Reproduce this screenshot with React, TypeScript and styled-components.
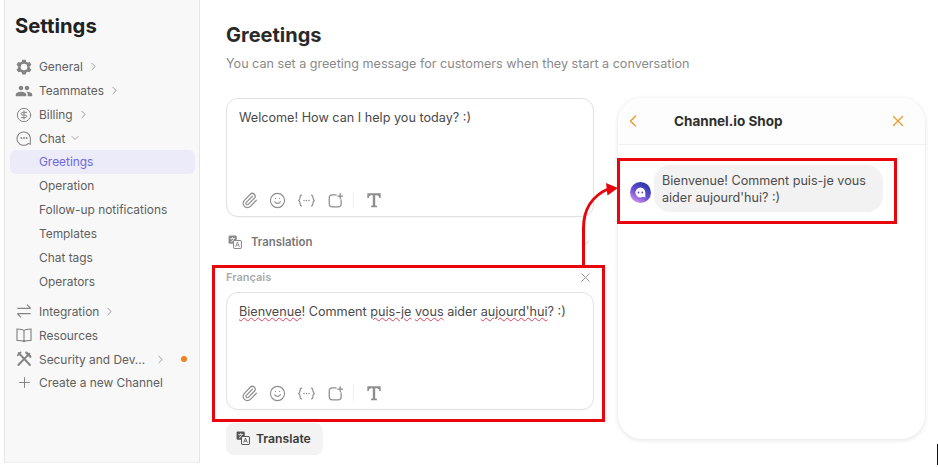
import styled, { createGlobalStyle } from "styled-components";
import {
  ChevronDown,
  ChevronLeft,
  ChevronRight,
  CircleDollarSign,
  Paperclip,
  Plus,
  Smile,
  X,
} from "lucide-react";
import { MdPeople } from "react-icons/md";
import type { ReactNode } from "react";

const GlobalStyle = createGlobalStyle`
  html, body {
    margin: 0;
    padding: 0;
    background: #fff;
    overflow: hidden;
  }
  * {
    box-sizing: border-box;
  }
`;

const Page = styled.div`
  position: relative;
  display: flex;
  width: 938px;
  height: 468px;
  font-family: Inter, "Liberation Sans", sans-serif;
  color: #333;
  overflow: hidden;
`;

const Sidebar = styled.aside`
  width: 196px;
  height: 463px;
  margin-left: 4px;
  padding: 14px 4px 0 5px;
  flex-shrink: 0;
  background: #f8f8f8;
  border-left: 1px solid #e6e6e6;
  border-right: 1px solid #e4e4e4;
  border-bottom: 1px solid #f0f0f0;
`;

const SideTitle = styled.h1`
  margin: 0 0 17px 5px;
  font-size: 20.3px;
  line-height: 24px;
  font-weight: 700;
  color: #222;
`;

const NavGroup = styled.nav<{ $gap?: number }>`
  display: flex;
  flex-direction: column;
  margin-top: ${(p) => p.$gap ?? 0}px;
`;

const NavRow = styled.div<{ $active?: boolean }>`
  display: flex;
  align-items: center;
  height: 23.85px;
  padding-left: 5px;
  font-size: 11.9px;
  white-space: nowrap;
  border-radius: 6px;
  color: ${(p) => (p.$active ? "#7068dc" : "#5f5f5f")};
  background: ${(p) => (p.$active ? "#ecebfa" : "transparent")};
`;

const IconSlot = styled.span`
  display: flex;
  align-items: center;
  justify-content: center;
  width: 18px;
  height: 18px;
  margin-right: 6px;
  color: #838383;
  flex-shrink: 0;
`;

const SubLabel = styled.span`
  margin-left: 24px;
  margin-bottom: 1px;
`;

const Caret = styled.span<{ $offset?: number }>`
  display: flex;
  margin-left: ${(p) => p.$offset ?? 4}px;
  color: #8a8a8a;
`;

const Dot = styled.span`
  width: 6px;
  height: 6px;
  margin-left: 14px;
  border-radius: 50%;
  background: #f0821e;
`;

const Main = styled.main`
  flex: 1;
  display: flex;
  flex-direction: column;
  padding: 22px 0 0 26px;
`;

const MainTitle = styled.h2`
  margin: 0;
  font-size: 20px;
  line-height: 26px;
  font-weight: 700;
  color: #2a2a2a;
`;

const Subtitle = styled.p`
  margin: 7px 0 0;
  font-size: 12.6px;
  line-height: 17px;
  color: #8a8a8a;
`;

const Columns = styled.div`
  display: flex;
  margin-top: 26px;
`;

const EditorColumn = styled.div`
  width: 393px;
  margin-left: -14px;
  flex-shrink: 0;
`;

const Editor = styled.div<{ $height: number }>`
  display: flex;
  flex-direction: column;
  justify-content: space-between;
  height: ${(p) => p.$height}px;
  padding: 9px 12px 6px;
  background: #fff;
  border: 1px solid #e2e2e2;
  border-radius: 12px;
  box-shadow: 0 1px 2px rgba(0, 0, 0, 0.03);
`;

const FirstEditor = styled.div`
  padding: 0 11px 0 14px;
`;

const EditorText = styled.div`
  font-size: 12.65px;
  line-height: 20px;
  color: #4a4a4a;
`;

const Misspelled = styled.span`
  text-decoration: underline wavy #e0405a 1px;
  text-underline-offset: 1px;
`;

const Toolbar = styled.div`
  display: flex;
  align-items: center;
  color: #8e8e8e;
`;

const ToolButton = styled.span`
  display: flex;
  align-items: center;
  justify-content: center;
  width: 20px;
  height: 20px;
  margin-right: 8.8px;
`;

const ToolDivider = styled.span`
  width: 1px;
  height: 16px;
  margin: 0 10px 0 -1px;
  background: #efefef;
`;

const TranslationRow = styled.div`
  display: flex;
  align-items: center;
  height: 26px;
  margin: 12px 11px 10px 14px;
  padding-left: 2px;
  font-size: 11.4px;
  font-weight: 600;
  color: #777;
`;

const RowIcon = styled.span`
  display: flex;
  margin-right: 9px;
`;

const RowCaret = styled.span`
  display: flex;
  margin-left: auto;
  margin-right: 2px;
  color: #c4c4c4;
`;

const RedBox = styled.div`
  height: 157px;
  padding: 0 8px 0 11px;
  border: 3px solid #e8060c;
`;

const LangHead = styled.div`
  display: flex;
  align-items: center;
  justify-content: space-between;
  height: 24px;
  padding-bottom: 6px;
  padding-right: 1px;
  font-size: 11px;
  font-weight: 600;
  color: #ababab;
`;

const LangClose = styled.span`
  display: flex;
  color: #8f8f8f;
`;

const TranslateButton = styled.button`
  display: flex;
  align-items: center;
  gap: 6px;
  width: 97px;
  height: 32px;
  margin: 1px 0 0 14px;
  padding: 0 0 2px 10px;
  border: 0;
  border-radius: 8px;
  background: #f3f3f3;
  font-family: inherit;
  font-size: 12.2px;
  font-weight: 600;
  color: #3a3a3a;
`;

const Preview = styled.section`
  display: flex;
  flex-direction: column;
  width: 307px;
  height: 341px;
  margin-left: 13px;
  border-radius: 24px;
  background: #fff;
  box-shadow: 0 1px 5px rgba(0, 0, 0, 0.12);
`;

const PreviewHeader = styled.header`
  display: flex;
  align-items: center;
  height: 47px;
  padding: 0 18px 0 5px;
  border-bottom: 1px solid #f1f1f1;
  background: #fdfdfd;
  border-radius: 24px 24px 0 0;
`;

const PreviewTitle = styled.h3`
  margin: 0 0 0 31px;
  font-size: 13.5px;
  font-weight: 700;
  color: #2e2e2e;
`;

const HeaderClose = styled.span`
  display: flex;
  margin-left: auto;
  color: #ee9a26;
`;

const HeaderBack = styled.span`
  display: flex;
  color: #ee9a26;
`;

const MessageBox = styled.div`
  display: flex;
  align-items: center;
  width: 280px;
  height: 66px;
  margin: 13px 0 0 -1px;
  padding-left: 10px;
  border: 3px solid #e8060c;
`;

const Avatar = styled.svg`
  flex-shrink: 0;
  margin-top: 3px;
`;

const Bubble = styled.div`
  width: 229px;
  height: 47px;
  margin: 0 0 5px 3px;
  padding: 7px 8px;
  border-radius: 16px;
  background: #f2f2f2;
  font-size: 12.6px;
  line-height: 17.4px;
  color: #4c4c4c;
`;

const ArrowLayer = styled.svg`
  position: absolute;
  top: 170px;
  left: 570px;
`;

const CursorMark = styled.span`
  position: absolute;
  left: 937px;
  top: 444px;
  width: 1px;
  height: 21px;
  background: #111;
`;

const GearIcon = () => (
  <svg width="16" height="16" viewBox="0 0 24 24" fill="#838383">
    <path
      fillRule="evenodd"
      d="M9.5 1h5l.8 3.2 2.1 1.2 3.2-.9 2.4 4.2-2.4 2.3v2.4l2.4 2.3-2.4 4.2-3.2-.9-2.1 1.2-.8 3.2h-5l-.8-3.2-2.1-1.2-3.2.9L.8 15.7l2.4-2.3V11L.8 8.7l2.4-4.2 3.2.9 2.1-1.2zM12 7a5 5 0 1 0 0 10 5 5 0 0 0 0-10z"
    />
  </svg>
);

const ChatIcon = () => (
  <svg width="16" height="16" viewBox="0 0 24 24" fill="none" stroke="#838383" strokeWidth="1.6">
    <path d="M21.5 21.5l-3.2-1.2A10 10 0 1 1 21.5 12v9.5z" strokeLinejoin="round" />
    <circle cx="8" cy="12" r="0.6" fill="#838383" />
    <circle cx="12" cy="12" r="0.6" fill="#838383" />
    <circle cx="16" cy="12" r="0.6" fill="#838383" />
  </svg>
);

const SwapIcon = () => (
  <svg width="16" height="16" viewBox="0 0 24 24" fill="none" stroke="#838383" strokeWidth="1.8">
    <path d="M2 8h20M16.5 2.5L22 8M22 16H2M7.5 21.5L2 16" />
  </svg>
);

const BookIcon = () => (
  <svg width="16" height="16" viewBox="0 0 24 24" fill="none" stroke="#838383" strokeWidth="1.7">
    <path d="M12 5.5C10 3.5 6 3 1.5 3v17c4.500 0 8.500 0 10.500 2 2-2 6-2 10.500-2V3C18 3 14 3.500 12 5.500zM12 5.500V22" />
  </svg>
);

const ToolsIcon = () => (
  <svg width="16" height="16" viewBox="0 0 24 24" fill="none" stroke="#838383" strokeLinecap="round">
    <path d="M4 3l17 18" strokeWidth="2.8" />
    <path d="M20 4L3.5 21" strokeWidth="2.8" />
    <path d="M15.5 2.5l6 6" strokeWidth="3.4" />
    <path d="M2.5 6.5L7 2" strokeWidth="2.4" />
  </svg>
);

const TranslateIcon = ({ color }: { color: string }) => (
  <svg width="14" height="14" viewBox="0 0 24 24" fill="none">
    <rect x="1" y="1" width="14" height="14" rx="2" fill={color} />
    <path d="M4 6h8M8 3.5V6M5 12c3-1.500 4.500-3.500 5-6M6 7.500c1 2 2.500 3.500 5 4.500" stroke="#fff" strokeWidth="1.2" />
    <rect x="9.5" y="9.5" width="13.5" height="13.5" rx="2" fill="#fff" stroke={color} strokeWidth="1.8" />
    <path d="M13 20l3.2-8 3.2 8M14.2 17.5h4" stroke={color} strokeWidth="1.5" />
  </svg>
);

const VariableIcon = () => (
  <svg width="17" height="17" viewBox="0 0 24 24" fill="none" stroke="#8e8e8e" strokeWidth="1.7" strokeLinecap="round">
    <path d="M5 4.5c-2 0-2 1-2 3s0 3-2 4.500c2 1.500 2 2.500 2 4.500s0 3 2 3" />
    <path d="M19 4.5c2 0 2 1 2 3s0 3 2 4.500c-2 1.500-2 2.500-2 4.500s0 3-2 3" />
    <path d="M8.5 12h.01M12 12h.01M15.5 12h.01" strokeWidth="2.2" />
  </svg>
);

const AddFrameIcon = () => (
  <svg width="15" height="15" viewBox="0 0 24 24" fill="none" stroke="#8e8e8e" strokeWidth="2" strokeLinecap="round">
    <path d="M13 3H7a5 5 0 0 0-5 5v9a5 5 0 0 0 5 5h9a5 5 0 0 0 5-5v-6" />
    <path d="M19.5 1v8M15.5 5h8" />
  </svg>
);

const EditorTools = () => (
  <Toolbar>
    <ToolButton>
      <Paperclip size={17} strokeWidth={1.7} />
    </ToolButton>
    <ToolButton>
      <Smile size={17} strokeWidth={1.6} />
    </ToolButton>
    <ToolButton>
      <VariableIcon />
    </ToolButton>
    <ToolButton>
      <AddFrameIcon />
    </ToolButton>
    <ToolDivider />
    <ToolButton>
      <svg width="16" height="16" viewBox="0 0 24 24" fill="#8e8e8e">
        <path d="M2 2h20v7h-2c-.4-2.500-1.500-4-4-4h-2.200v14.500c0 .8.600 1.200 2.700 1.300V23h-9v-2.200c2.100-.1 2.700-.5 2.700-1.300V5H8C5.500 5 4.400 6.500 4 9H2z" />
      </svg>
    </ToolButton>
  </Toolbar>
);

const Row = ({ icon, label, caret }: { icon: ReactNode; label: string; caret?: boolean }) => (
  <NavRow>
    <IconSlot>{icon}</IconSlot>
    {label}
    {caret && (
      <Caret>
        <ChevronRight size={13} strokeWidth={1.6} />
      </Caret>
    )}
  </NavRow>
);

export default function App() {
  return (
    <Page>
      <GlobalStyle />
      <Sidebar>
        <SideTitle>Settings</SideTitle>
        <NavGroup>
          <Row icon={<GearIcon />} label="General" caret />
          <Row icon={<MdPeople size={18} />} label="Teammates" caret />
          <Row icon={<CircleDollarSign size={16} strokeWidth={1.5} />} label="Billing" caret />
          <NavRow>
            <IconSlot>
              <ChatIcon />
            </IconSlot>
            Chat
            <Caret>
              <ChevronDown size={12} strokeWidth={1.6} />
            </Caret>
          </NavRow>
          <NavRow $active>
            <SubLabel>Greetings</SubLabel>
          </NavRow>
          {["Operation", "Follow-up notifications", "Templates", "Chat tags", "Operators"].map((item) => (
            <NavRow key={item}>
              <SubLabel>{item}</SubLabel>
            </NavRow>
          ))}
        </NavGroup>
        <NavGroup $gap={6}>
          <Row icon={<SwapIcon />} label="Integration" caret />
          <Row icon={<BookIcon />} label="Resources" />
          <NavRow>
            <IconSlot>
              <ToolsIcon />
            </IconSlot>
            Security and Dev...
            <Caret $offset={9}>
              <ChevronRight size={13} strokeWidth={1.6} />
            </Caret>
            <Dot />
          </NavRow>
          <Row icon={<Plus size={17} strokeWidth={1.4} />} label="Create a new Channel" />
        </NavGroup>
      </Sidebar>
      <Main>
        <MainTitle>Greetings</MainTitle>
        <Subtitle>You can set a greeting message for customers when they start a conversation</Subtitle>
        <Columns>
          <EditorColumn>
            <FirstEditor>
              <Editor $height={119}>
                <EditorText>Welcome! How can I help you today? :)</EditorText>
                <EditorTools />
              </Editor>
            </FirstEditor>
            <TranslationRow>
              <RowIcon>
                <TranslateIcon color="#8a8a8a" />
              </RowIcon>
              Translation
              <RowCaret>
                <ChevronDown size={13} strokeWidth={1.5} />
              </RowCaret>
            </TranslationRow>
            <RedBox>
              <LangHead>
                Français
                <LangClose>
                  <X size={15} strokeWidth={1.5} />
                </LangClose>
              </LangHead>
              <Editor $height={118}>
                <EditorText>
                  <Misspelled>Bienvenue</Misspelled>! Comment <Misspelled>puis-je</Misspelled>{" "}
                  <Misspelled>vous</Misspelled> aider <Misspelled>aujourd'hui</Misspelled>? :)
                </EditorText>
                <EditorTools />
              </Editor>
            </RedBox>
            <TranslateButton>
              <TranslateIcon color="#555" />
              Translate
            </TranslateButton>
          </EditorColumn>
          <Preview>
            <PreviewHeader>
              <HeaderBack>
                <ChevronLeft size={20} strokeWidth={1.7} />
              </HeaderBack>
              <PreviewTitle>Channel.io Shop</PreviewTitle>
              <HeaderClose>
                <X size={18} strokeWidth={1.7} />
              </HeaderClose>
            </PreviewHeader>
            <MessageBox>
              <Avatar width="21" height="21" viewBox="0 0 21 21">
                <defs>
                  <linearGradient id="channelAvatar" x1="0.8" y1="0" x2="0.2" y2="1">
                    <stop offset="0" stopColor="#23349c" />
                    <stop offset="0.55" stopColor="#6a4fd8" />
                    <stop offset="1" stopColor="#d79be8" />
                  </linearGradient>
                </defs>
                <circle cx="10.5" cy="10.5" r="10.5" fill="url(#channelAvatar)" />
                <path d="M10.5 5.5a5 5 0 1 0 2.5 9.300l2.300.7V10.500a5 5 0 0 0-4.800-5z" fill="#fff" />
                <circle cx="8.5" cy="10.5" r="0.9" fill="#5a45c0" />
                <circle cx="12.3" cy="10.5" r="0.9" fill="#5a45c0" />
              </Avatar>
              <Bubble>Bienvenue! Comment puis-je vous aider aujourd'hui? :)</Bubble>
            </MessageBox>
          </Preview>
        </Columns>
      </Main>
      <ArrowLayer width="50" height="100" viewBox="0 0 50 100" fill="none">
        <path d="M13.5 96V58C13.5 40 22 26 38 19" stroke="#e8060c" strokeWidth="3" />
        <path d="M48 18L36 13l1.500 12.500z" fill="#e8060c" />
      </ArrowLayer>
      <CursorMark />
    </Page>
  );
}
